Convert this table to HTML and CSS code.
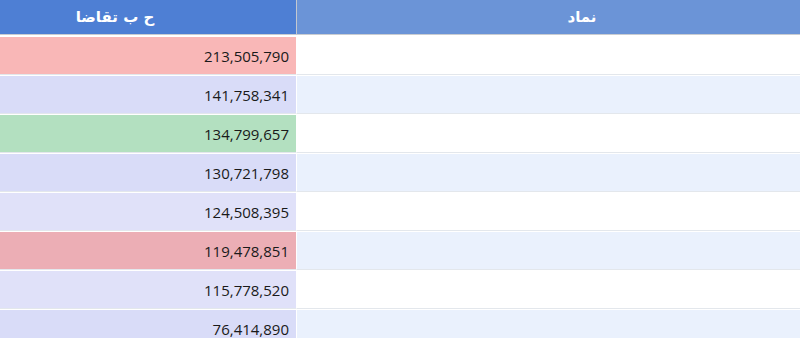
FILE: index.html
```html
<!DOCTYPE html>
<html lang="fa" dir="rtl">
<head>
<meta charset="utf-8">
<title>جدول</title>
<link rel="stylesheet" href="styles.css">
</head>
<body>
<table class="grid">
  <colgroup>
    <col class="c-sym">
    <col class="c-dem">
  </colgroup>
  <thead>
    <tr>
      <th class="col-symbol"><div class="head-sym">نماد</div></th>
      <th class="col-demand"><div class="head-dem">ح ب تقاضا</div></th>
    </tr>
  </thead>
  <tbody>
    <tr class="odd"><td class="sym"></td><td class="val red"><div class="num">213,505,790</div></td></tr>
    <tr class="even"><td class="sym"></td><td class="val lav"><div class="num">141,758,341</div></td></tr>
    <tr class="odd"><td class="sym"></td><td class="val green"><div class="num">134,799,657</div></td></tr>
    <tr class="even"><td class="sym"></td><td class="val lav"><div class="num">130,721,798</div></td></tr>
    <tr class="odd"><td class="sym"></td><td class="val lav2"><div class="num">124,508,395</div></td></tr>
    <tr class="even"><td class="sym"></td><td class="val red2"><div class="num">119,478,851</div></td></tr>
    <tr class="odd"><td class="sym"></td><td class="val lav2"><div class="num">115,778,520</div></td></tr>
    <tr class="even"><td class="sym"></td><td class="val lav"><div class="num">76,414,890</div></td></tr>
  </tbody>
</table>
</body>
</html>
```

FILE: styles.css
```css
html, body {
  margin: 0;
  padding: 0;
  background: #ffffff;
}

body {
  font-family: "Open Sans", "DejaVu Sans", sans-serif;
  overflow: hidden;
}

.grid {
  width: 800px;
  border-collapse: separate;
  border-spacing: 0;
  table-layout: fixed;
}

.c-sym { width: 503px; }
.c-dem { width: 297px; }

.grid th {
  height: 34px;
  padding: 0;
  color: #ffffff;
  font-family: "DejaVu Sans", sans-serif;
  font-weight: bold;
  font-size: 15px;
  text-align: center;
  border-bottom: 1px solid #c9ccd1;
}

.col-symbol {
  background: #6b94d7;
}

.head-sym {
  padding-left: 67px;
}

.col-demand {
  background: #4e7fd4;
  border-right: 1px solid #c3c8d0;
}

.head-dem {
  padding-right: 66px;
}

.grid td {
  height: 37px;
  padding: 0;
  border-top: 1px solid #ffffff;
  border-bottom: 1px solid #e3e7ec;
  font-size: 15px;
  color: #1a1a1a;
}

.grid tbody tr:first-child td {
  border-top-width: 2px;
}

.odd .sym { background: #ffffff; }
.even .sym { background: #eaf1fd; }

.val {
  border-right: 1px solid #ffffff;
}

.num {
  text-align: right;
  padding-right: 7px;
}

.red { background: #f9b7b7; }
.red2 { background: #ecaeb5; }
.lav { background: #d9dcf8; }
.lav2 { background: #e0e1f9; }
.green { background: #b3e0c0; }
```
